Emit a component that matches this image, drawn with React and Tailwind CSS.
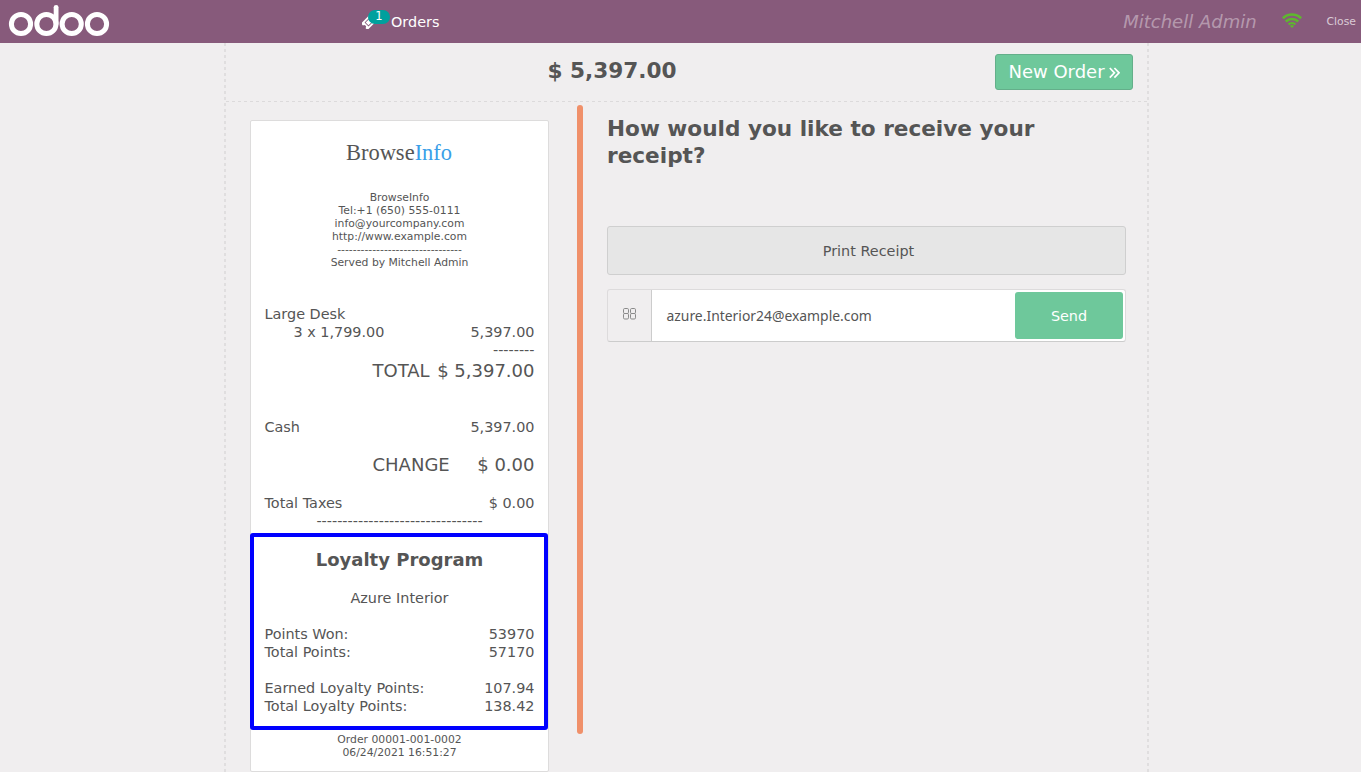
import React from 'react';

function OdooLogo() {
  return (
    <svg className="block h-[43px] w-[112px]" viewBox="0 0 112 43" fill="none" stroke="#fff" strokeWidth="5">
      <circle cx="21" cy="24" r="9.6" />
      <circle cx="46.4" cy="24" r="9.6" />
      <circle cx="71.7" cy="24" r="9.6" />
      <circle cx="97" cy="24" r="9.6" />
      <path d="M56.1 24V7.3" strokeWidth="4.8" strokeLinecap="round" />
    </svg>
  );
}

function WifiIcon() {
  return (
    <svg className="-mt-[2px] ml-[25px] h-[15px] w-[20px]" viewBox="0 0 20 15" fill="none" stroke="#5eb82e" strokeWidth="2.6">
      <path d="M0.9 5.2A13 13 0 0 1 19.1 5.2" />
      <path d="M3.8 8.5A8.8 8.8 0 0 1 16.2 8.5" />
      <path d="M6.6 11.5A4.9 4.9 0 0 1 13.4 11.5" strokeWidth="2.3" />
      <path d="M10 14.9L8 12.9A2.8 2.8 0 0 1 12 12.9Z" fill="#5eb82e" stroke="none" />
    </svg>
  );
}

function DoubleAngleIcon() {
  return (
    <svg className="mt-[2px] h-[12px] w-[11px]" viewBox="0 0 11 12" fill="none" stroke="#fff" strokeWidth="1.7">
      <path d="M0.8 1L5.4 5.8L0.8 10.6" />
      <path d="M5.4 1L10 5.8L5.4 10.6" />
    </svg>
  );
}

function TopBar() {
  return (
    <header className="flex h-[43px] shrink-0 items-center bg-[#875a7b] text-white">
      <div className="w-[362px]">
        <OdooLogo />
      </div>
      <div className="relative flex items-center pt-[2px] text-[14.4px]">
        <svg className="h-[14px] w-[14px]" viewBox="0 0 14 14">
          <g transform="rotate(-45 7 7)">
            <path
              fill="#fff"
              fillRule="evenodd"
              d="M0.2 2.4H13.8V5.2A1.8 1.8 0 0 0 13.8 8.8V11.6H0.2V8.8A1.8 1.8 0 0 0 0.2 5.2ZM3.5 4.2V9.8H10.5V4.2ZM4.3 5H9.7V9H4.3Z"
            />
          </g>
        </svg>
        <span className="absolute top-0 left-[6px] flex h-[14px] w-[22px] items-center justify-center rounded-full bg-[#00a09d] text-[11.5px] leading-none">
          1
        </span>
        <span className="ml-[15px]">Orders</span>
      </div>
      <div className="ml-auto flex items-center">
        <span className="text-[18px] text-white/40 italic">Mitchell Admin</span>
        <WifiIcon />
        <span className="mt-[2px] mr-[5px] ml-[25px] text-[10.8px] text-white/70">Close</span>
      </div>
    </header>
  );
}

function Row({ label, value, className = '' }) {
  return (
    <div className={`flex h-[18px] justify-between leading-[18px] ${className}`}>
      <span>{label}</span>
      <span>{value}</span>
    </div>
  );
}

function Receipt() {
  return (
    <div className="ml-[25px] h-[652px] w-[299px] rounded-[2px] border border-[#dddcdc] bg-white px-[13.5px] text-[14.4px]">
      <div className="mt-[18px] h-[28px] pr-[1px] text-center font-['Liberation_Serif',serif] text-[22.5px] leading-[28px]">
        Browse<span className="text-[#3a9fe8]">Info</span>
      </div>
      <div className="mt-[24px] text-center text-[10.8px] leading-[13px]">
        <div>BrowseInfo</div>
        <div>Tel:+1 (650) 555-0111</div>
        <div>info@yourcompany.com</div>
        <div>http://www.example.com</div>
        <div>--------------------------------</div>
        <div>Served by Mitchell Admin</div>
      </div>
      <div className="mt-[36px] h-[18px] leading-[18px]">Large Desk</div>
      <Row label="3 x 1,799.00" value="5,397.00" className="pl-[29px]" />
      <div className="h-[18px] text-right leading-[18px]">--------</div>
      <div className="flex h-[23px] justify-between pl-[108px] text-[18px] leading-[23px]">
        <span>TOTAL</span>
        <span>$ 5,397.00</span>
      </div>
      <Row label="Cash" value="5,397.00" className="mt-[36px]" />
      <div className="mt-[18px] flex h-[22px] justify-between pl-[108px] text-[18px] leading-[22px]">
        <span>CHANGE</span>
        <span>$ 0.00</span>
      </div>
      <Row label="Total Taxes" value="$ 0.00" className="mt-[18px]" />
      <div className="h-[18px] text-center leading-[18px]">--------------------------------</div>
      <section className="-mx-[14.5px] mt-[3px] h-[197px] w-[298px] rounded-[3px] border-4 border-[#0000ff] pt-[12px] pr-[9.5px] pl-[10.5px]">
        <h2 className="h-[22px] text-center text-[18px] leading-[22px] font-bold">Loyalty Program</h2>
        <div className="mt-[18px] mb-[18px] h-[18px] text-center leading-[18px]">Azure Interior</div>
        <Row label="Points Won:" value="53970" />
        <Row label="Total Points:" value="57170" />
        <Row label="Earned Loyalty Points:" value="107.94" className="mt-[18px]" />
        <Row label="Total Loyalty Points:" value="138.42" />
      </section>
      <div className="mt-[3px] text-center text-[10.8px] leading-[13px]">
        <div>Order 00001-001-0002</div>
        <div>06/24/2021 16:51:27</div>
      </div>
    </div>
  );
}

function EmailIcon() {
  return (
    <svg className="h-[12px] w-[14px]" viewBox="0 0 14 12" fill="none" stroke="#8a8a8a" strokeWidth="1">
      <rect x="0.5" y="0.5" width="5" height="5" rx="1.2" />
      <rect x="0.5" y="5.5" width="5" height="5.5" rx="1.2" />
      <rect x="7.5" y="0.5" width="5" height="5" rx="1.2" />
      <rect x="7.5" y="5.5" width="5" height="5.5" rx="1.2" />
    </svg>
  );
}

function ReceiptOptions() {
  return (
    <div className="ml-[24px] w-[519px]">
      <h1 className="mt-[13px] h-[54px] text-[21.6px] leading-[27px] font-bold">
        How would you like to receive your receipt?
      </h1>
      <button className="mt-[57px] flex h-[49px] w-full items-center justify-center rounded-[3px] border border-[#cfcfcf] bg-[#e6e6e6] pt-[2px] pl-[4px] text-[14.4px]">
        Print Receipt
      </button>
      <div className="mt-[14px] flex h-[53px] rounded-[3px] border border-[#dddbdc] border-b-[#cccccc]">
        <div className="flex w-[44px] items-center justify-center border-r border-[#cccccc] pb-[4px]">
          <EmailIcon />
        </div>
        <div className="flex flex-1 items-center bg-white pt-[2px] pl-[14.5px] font-['Noto_Sans',sans-serif] text-[13.9px]">
          azure.Interior24@example.com
        </div>
        <div className="rounded-r-[3px] bg-white py-[2px] pr-[2px]">
          <button className="h-[47px] w-[108px] rounded-[3px] bg-[#6ec89b] pt-[2px] text-[14.4px] text-white">Send</button>
        </div>
      </div>
    </div>
  );
}

const verticalDash =
  'shrink-0 bg-[repeating-linear-gradient(to_bottom,#dcdadb_0px,#dcdadb_3px,transparent_3px,transparent_6px)]';

export default function App() {
  return (
    <div className="flex h-[772px] w-[1361px] flex-col overflow-hidden bg-[#f0eeef] font-['DejaVu_Sans',sans-serif] text-[#555555]">
      <TopBar />
      <main className="flex min-h-0 flex-1 pl-[224px]">
        <div className={`${verticalDash} w-[2px] opacity-80`} />
        <div className="w-[921px]">
          <div className="flex h-[58px] items-start">
            <div className="mt-[14px] ml-[321.5px] text-[21.6px] leading-[27px] font-bold">$ 5,397.00</div>
            <button className="mt-[11px] mr-[14px] ml-auto flex h-[36px] w-[138px] items-center justify-center gap-[4px] rounded-[3px] border border-[#64af8a] bg-[#6ec89b] pb-px text-[18px] text-white">
              New Order
              <DoubleAngleIcon />
            </button>
          </div>
          <div className="h-px bg-[repeating-linear-gradient(to_right,#dcdadb_0px,#dcdadb_3px,transparent_3px,transparent_6px)]" />
          <div className="flex items-start">
            <div className="w-[351px] pt-[18px]">
              <div className="-ml-px">
                <Receipt />
              </div>
            </div>
            <div className="mt-[3px] h-[629px] w-[6px] rounded-full bg-[#f0906a]" />
            <ReceiptOptions />
          </div>
        </div>
        <div className={`${verticalDash} w-[2px] opacity-80`} />
      </main>
    </div>
  );
}
